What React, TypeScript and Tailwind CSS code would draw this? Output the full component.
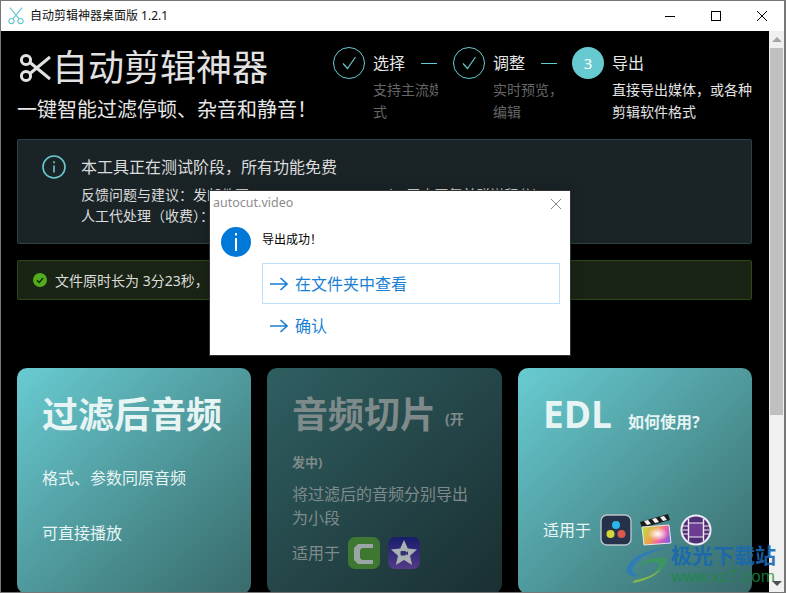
import React from 'react';

const Scissors = ({ className, weight = 3 }: { className?: string; weight?: number }) => (
  <svg viewBox="0 0 32 32" fill="none" stroke="currentColor" strokeWidth={weight} className={className}>
    <circle cx="7" cy="8" r="4.6" />
    <circle cx="7" cy="24" r="4.6" />
    <path d="M11 10.5 31 27M11 21.5 31 5" />
  </svg>
);

const CheckCircle = () => (
  <svg viewBox="0 0 32 32" fill="none" stroke="#66cad0" className="w-8 h-8 shrink-0">
    <circle cx="16" cy="16" r="15.5" />
    <path d="M10 16.5l4.5 5L22.5 10" strokeWidth="1.2" />
  </svg>
);

const Arrow = () => (
  <svg viewBox="0 0 18 14" fill="none" stroke="#1a7fd4" strokeWidth="1.6" className="w-[18px] h-[14px] shrink-0">
    <path d="M0 7h17M10.5 1l6.5 6-6.5 6" />
  </svg>
);

const Step = ({
  done,
  num,
  title,
  lines,
  bright,
  width,
  descWidth,
}: {
  done?: boolean;
  num?: string;
  title: string;
  lines: string[];
  bright?: boolean;
  width: string;
  descWidth: string;
}) => (
  <div className={`flex ${width}`}>
    {done ? (
      <CheckCircle />
    ) : (
      <div className="w-8 h-8 shrink-0 rounded-full bg-[#66cad0] text-white text-[15px] leading-8 text-center">{num}</div>
    )}
    <div className="ml-2">
      <div className="flex items-center h-8">
        <span className="text-[16px] leading-8 text-[#e8e8e8]">{title}</span>
        {done && <span className="ml-[16px] w-[16px] h-px bg-[#66cad0]" />}
      </div>
      <div className={`text-[14px] leading-[22px] overflow-hidden ${descWidth} ${bright ? 'text-[#e4e4e4]' : 'text-[#666666]'}`}>
        {lines.map((l) => (
          <div key={l} className="whitespace-nowrap">{l}</div>
        ))}
      </div>
    </div>
  </div>
);

const Resolve = () => (
  <svg viewBox="0 0 32 32" className="w-8 h-8">
    <rect x="1" y="1" width="30" height="30" rx="6" fill="#26324a" stroke="#b9c4c8" strokeWidth="1.4" />
    <circle cx="16" cy="11" r="4" fill="#27b8e8" />
    <circle cx="10.5" cy="20" r="4" fill="#d6d636" />
    <circle cx="21.5" cy="20" r="4" fill="#e0584c" />
  </svg>
);

const FinalCut = () => (
  <svg viewBox="0 0 32 32" className="w-8 h-8">
    <defs>
      <linearGradient id="fcp" x1="0" y1="0.2" x2="1" y2="0.6">
        <stop offset="0" stopColor="#b8e040" />
        <stop offset="0.45" stopColor="#f0a050" />
        <stop offset="0.7" stopColor="#f060a8" />
        <stop offset="1" stopColor="#8a5ae0" />
      </linearGradient>
      <radialGradient id="fcp2" cx="0.55" cy="0.45" r="0.35">
        <stop offset="0" stopColor="#ffffff" />
        <stop offset="1" stopColor="#ffffff" stopOpacity="0" />
      </radialGradient>
    </defs>
    <path d="M0 8 28 0l2 6L2 14z" fill="#1d1d1d" />
    <path d="M4 7l4-1 3 4-4 1zM12 5l4-1 3 4-4 1zM20 3l4-1 3 4-4 1z" fill="#f2f2f2" />
    <path d="M2 13l27-2 2 18-27 2z" fill="url(#fcp)" stroke="#e8e8e8" />
    <path d="M2 13l27-2 2 18-27 2z" fill="url(#fcp2)" />
  </svg>
);

const Compressor = () => (
  <svg viewBox="0 0 32 32" className="w-8 h-8">
    <circle cx="16" cy="16" r="15.5" fill="#f0eaf4" />
    <circle cx="16" cy="16" r="13.5" fill="#4f2f74" />
    <rect x="9" y="9" width="14" height="14" fill="#6b3c92" />
    <path d="M8.5 5v22M23.5 5v22" stroke="#f0eaf4" strokeWidth="1.4" />
    <path d="M9 9h14M9 23h14M3 12h5M3 16h5M3 20h5M24 12h5M24 16h5M24 20h5" stroke="#f0eaf4" strokeWidth="1.2" />
  </svg>
);

const Camtasia = () => (
  <svg viewBox="0 0 32 32" className="w-8 h-8">
    <rect width="32" height="32" rx="7" fill="#4a8f2a" />
    <path d="M25 7H10L6 11v12l4 4h15v-4H14l-2-2V13l2-2h11z" fill="#d0d0d0" />
  </svg>
);

const IMovie = () => (
  <svg viewBox="0 0 32 32" className="w-8 h-8">
    <defs>
      <linearGradient id="imv" x1="0" y1="0" x2="0" y2="1">
        <stop offset="0" stopColor="#14107c" />
        <stop offset="1" stopColor="#6a3ca8" />
      </linearGradient>
    </defs>
    <rect width="32" height="32" rx="7" fill="url(#imv)" />
    <path d="M16 3l3.8 8.6 9.2.9-7 6.2 2.1 9.3-8.1-4.9-8.1 4.9 2.1-9.3-7-6.2 9.2-.9z" fill="#e4e4e4" />
    <rect x="12.5" y="14" width="5.5" height="4.5" rx="1" fill="#3c2c88" />
    <path d="M18 15.5l2-1.2v3.9l-2-1.2z" fill="#3c2c88" />
  </svg>
);

export default function App() {
  return (
    <div className="relative w-[786px] h-[593px] overflow-hidden flex flex-col bg-white border-t border-l border-b border-r-2 border-[#777777] font-['Noto_Sans','Noto_Sans_CJK_SC',sans-serif]">
      {/* title bar */}
      <div className="h-[30px] shrink-0 flex items-center bg-white">
        <Scissors weight={2} className="ml-[6px] w-[18px] h-[18px] text-[#66cad0] -rotate-90" />
        <span className="ml-[5px] text-[12px] text-[#111111] whitespace-nowrap">自动剪辑神器桌面版 1.2.1</span>
        <div className="ml-auto flex items-center pr-[17px] gap-[36px]">
          <span className="w-[10px] h-px bg-black" />
          <span className="w-[10px] h-[10px] border border-black" />
          <svg viewBox="0 0 10 10" stroke="black" className="w-[10px] h-[10px]">
            <path d="M0 0l10 10M10 0 0 10" />
          </svg>
        </div>
      </div>

      <div className="flex-1 flex min-h-0">
        {/* main content */}
        <div className="w-[768px] bg-black pl-[16px] pr-[17px] overflow-hidden">
          <div className="h-[108px] flex">
            <div className="w-[316px] pt-[15px]">
              <div className="flex items-center h-[44px] pl-[2px] text-[#e2e2e2]">
                <Scissors className="w-[32px] h-[32px]" />
                <span className="ml-[1px] text-[36px] leading-[44px] whitespace-nowrap">自动剪辑神器</span>
              </div>
              <div className="mt-[6px] text-[20px] leading-[28px] text-[#e6e6e6] whitespace-nowrap">一键智能过滤停顿、杂音和静音！</div>
            </div>
            <div className="flex pt-[16px]">
              <Step done title="选择" lines={['支持主流媒体', '式']} width="w-[120px]" descWidth="w-[65px]" />
              <Step done title="调整" lines={['实时预览，', '编辑']} width="w-[119px]" descWidth="w-[65px]" />
              <Step num="3" title="导出" lines={['直接导出媒体，或各种', '剪辑软件格式']} bright width="w-[180px]" descWidth="w-[142px]" />
            </div>
          </div>

          {/* info box */}
          <div className="h-[105px] flex bg-[#1a2427] border border-[#2a4248] rounded-[2px] pl-[24px] pt-[15px]">
            <svg viewBox="0 0 24 24" fill="none" stroke="#66cad0" strokeWidth="1.6" className="w-6 h-6 shrink-0">
              <circle cx="12" cy="12" r="11" />
              <path d="M12 10.5v7M12 6.2v2" />
            </svg>
            <div className="ml-[15px] text-[#dcdcdc] whitespace-nowrap">
              <div className="text-[16px] leading-[24px]">本工具正在测试阶段，所有功能免费</div>
              <div className="mt-[5px] text-[14px] leading-[22px]">反馈问题与建议：发邮件至 21002410@qq.com（三天内回复并赠送积分）</div>
              <div className="-mt-px text-[14px] leading-[22px]">人工代处理（收费）：请加微信</div>
            </div>
          </div>

          {/* success box */}
          <div className="mt-[16px] h-[40px] flex items-center bg-[#1a2414] border border-[#2c4a18] rounded-[2px] pl-[15px] text-[14px] text-[#dcdcdc] whitespace-nowrap">
            <svg viewBox="0 0 14 14" className="w-[14px] h-[14px] shrink-0">
              <circle cx="7" cy="7" r="7" fill="#52ac1c" />
              <path d="M4 7.2l2.2 2.2L10 5" fill="none" stroke="#14240a" strokeWidth="1.4" />
            </svg>
            <span className="ml-2">文件原时长为 3分23秒，过滤后时长为 3分01秒</span>
          </div>

          {/* export cards */}
          <div className="mt-[68px] grid grid-cols-[234px_235px_234px] gap-x-[16px] text-[#e6f4f4]">
            <div className="h-[226px] rounded-[10px] bg-gradient-to-br from-[#68ccd2] to-[#386a6b] px-[25px] pt-[26px]">
              <div className="text-[36px] leading-[42px] font-bold whitespace-nowrap">过滤后音频</div>
              <div className="mt-[30px] text-[16px] leading-[24px]">格式、参数同原音频</div>
              <div className="mt-[31px] text-[16px] leading-[24px]">可直接播放</div>
            </div>
            <div className="h-[226px] rounded-[10px] bg-gradient-to-br from-[#2f5f62] to-[#1a2f31] px-[25px] pt-[26px] text-[#7f8a8a]">
              <div className="flex items-center h-[42px] whitespace-nowrap">
                <span className="text-[36px] leading-[42px] font-bold">音频切片</span>
                <span className="ml-[9px] mt-[8px] text-[14px] leading-[20px] font-bold">(开</span>
              </div>
              <div className="mt-[16px] text-[13px] leading-[20px] font-bold">发中)</div>
              <div className="mt-[10px] text-[16px] leading-[24px]">将过滤后的音频分别导出<br />为小段</div>
              <div className="mt-[7px] flex items-center gap-[8px]">
                <span className="text-[16px] leading-[32px]">适用于</span>
                <div className="flex gap-[8px] opacity-70">
                  <Camtasia />
                  <IMovie />
                </div>
              </div>
            </div>
            <div className="h-[226px] rounded-[10px] bg-gradient-to-br from-[#68ccd2] to-[#386a6b] pl-[25px] pt-[25px]">
              <div className="flex items-baseline">
                <span className="text-[37px] leading-[42px] font-bold font-['Open_Sans',sans-serif]">EDL</span>
                <span className="ml-[16px] text-[16px] font-bold">如何使用?</span>
              </div>
              <div className="mt-[79px] flex items-center gap-[9px]">
                <span className="text-[16px] leading-[32px]">适用于</span>
                <div className="flex gap-[8px]">
                  <Resolve />
                  <FinalCut />
                  <Compressor />
                </div>
              </div>
            </div>
          </div>
        </div>

        {/* scrollbar */}
        <div className="w-[15px] bg-[#f0f0f0] flex flex-col items-center">
          <div className="h-[17px] flex items-center justify-center">
            <span className="border-x-[5px] border-x-transparent border-b-[5px] border-b-[#a6a6a6]" />
          </div>
          <div className="w-[13px] h-[367px] bg-[#c0c0c0]" />
          <div className="mt-auto h-[17px] flex items-center justify-center">
            <span className="border-x-[5px] border-x-transparent border-t-[5px] border-t-[#505050]" />
          </div>
        </div>
      </div>

      {/* dialog */}
      <div className="absolute left-[208px] top-[189px] w-[362px] h-[166px] bg-white border border-[#333333] shadow-[0_0_12px_rgba(0,0,0,0.25)]">
        <div className="h-[24px] flex items-center justify-between pl-[3px] pr-[9px]">
          <span className="text-[12.5px] text-[#8c8c8c]">autocut.video</span>
          <svg viewBox="0 0 10 10" stroke="#888888" className="w-[10px] h-[10px] mt-[1px]">
            <path d="M0 0l10 10M10 0 0 10" />
          </svg>
        </div>
        <div className="flex pl-[11px] pt-[12px]">
          <div className="w-[30px] h-[30px] shrink-0 rounded-full bg-[#0078d7] flex items-center justify-center">
            <svg viewBox="0 0 4 18" fill="white" className="w-[4px] h-[18px]">
              <rect x="1" y="0" width="2" height="2.4" />
              <rect x="1" y="5" width="2" height="13" />
            </svg>
          </div>
          <div className="ml-[11px] w-[298px]">
            <div className="h-[24px] text-[12px] leading-[24px] text-black mt-[1px]">导出成功！</div>
            <div className="mt-[11px] h-[41px] flex items-center pl-[7px] border border-[#bde0fb] text-[16px] text-[#1a7fd4]">
              <Arrow />
              <span className="ml-[7px]">在文件夹中查看</span>
            </div>
            <div className="h-[44px] flex items-center pl-[8px] text-[16px] text-[#1a7fd4]">
              <Arrow />
              <span className="ml-[7px]">确认</span>
            </div>
          </div>
        </div>
      </div>

      {/* watermark */}
      <div className="absolute left-[625px] top-[543px] w-[160px] h-[48px]">
        <svg viewBox="0 0 44 38" className="absolute left-[0px] top-[2px] w-[44px] h-[38px]">
          <path d="M40 2C22 3 4 11 1 23c-1 6 6 9 13 7C6 29 4 25 9 18 15 10 28 5 40 2z" fill="#2a7ac0" opacity="0.85" />
          <path d="M12 20c6-7 22-10 28-7 3 3-4 12-14 15 5-4 9-9 6-11-5-2-13 0-20 3z" fill="#3a9a5a" opacity="0.85" />
          <path d="M6 37c10-1 24-6 30-15-6 6-18 11-27 12z" fill="#8cc04a" opacity="0.85" />
        </svg>
        <div className="absolute left-[45px] top-[-3px] text-[21px] leading-[28px] font-bold text-[#1a68b0] opacity-90 whitespace-nowrap">极光下载站</div>
        <div className="absolute left-[45px] top-[22px] text-[17px] leading-[22px] text-[#1c8a40] opacity-80 whitespace-nowrap font-['Liberation_Sans',sans-serif]">www.xz7.com</div>
      </div>
    </div>
  );
}
